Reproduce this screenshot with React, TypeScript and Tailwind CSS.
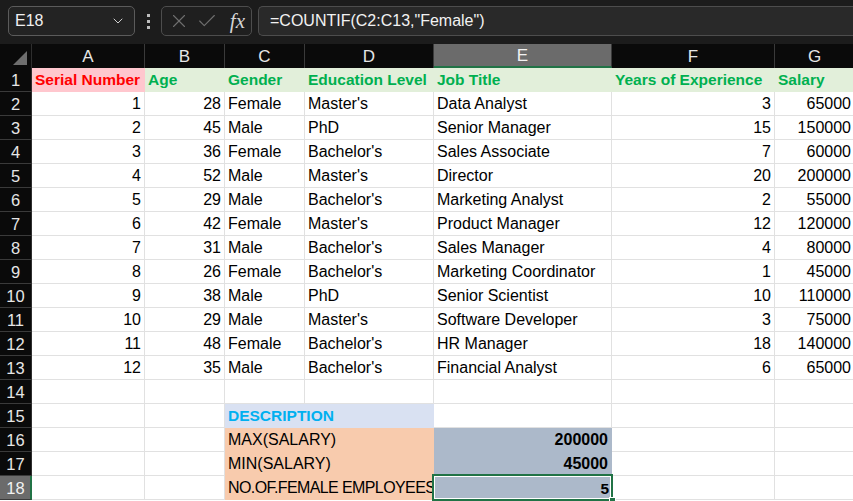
import React from "react";
import { ChevronDown, X, Check } from "lucide-react";

type Cell = string | number;

const rows: Cell[][] = [
  [1, 28, "Female", "Master's", "Data Analyst", 3, 65000],
  [2, 45, "Male", "PhD", "Senior Manager", 15, 150000],
  [3, 36, "Female", "Bachelor's", "Sales Associate", 7, 60000],
  [4, 52, "Male", "Master's", "Director", 20, 200000],
  [5, 29, "Male", "Bachelor's", "Marketing Analyst", 2, 55000],
  [6, 42, "Female", "Master's", "Product Manager", 12, 120000],
  [7, 31, "Male", "Bachelor's", "Sales Manager", 4, 80000],
  [8, 26, "Female", "Bachelor's", "Marketing Coordinator", 1, 45000],
  [9, 38, "Male", "PhD", "Senior Scientist", 10, 110000],
  [10, 29, "Male", "Master's", "Software Developer", 3, 75000],
  [11, 48, "Female", "Bachelor's", "HR Manager", 18, 140000],
  [12, 35, "Male", "Bachelor's", "Financial Analyst", 6, 65000],
];

const headers = ["Serial Number", "Age", "Gender", "Education Level", "Job Title", "Years of Experience", "Salary"];
const cols = ["A", "B", "C", "D", "E", "F", "G"];

const grid = "border-r border-b border-[#e1e1e1]";
const filled = "border-r border-b border-transparent";

function RowHead({ n, sel }: { n: number; sel?: boolean }) {
  return (
    <div
      className={
        sel
          ? "h-[24px] flex items-center justify-center bg-[#6b6b6b] text-[#f2f2f2] border-r-2 border-r-[#217346] border-b border-b-[#3a3a3a] text-[16.5px] pl-[1px] pt-[1px]"
          : "h-[24px] flex items-center justify-center bg-[#0a0a0a] text-[#e6e6e6] border-r border-r-[#2e2e2e] border-b border-b-[#3a3a3a] text-[16.5px] pt-[1px]"
      }
    >
      {n}
    </div>
  );
}

function C({
  children,
  right,
  cls,
}: {
  children?: React.ReactNode;
  right?: boolean;
  cls?: string;
}) {
  return (
    <div
      className={
        "h-[24px] flex items-center whitespace-nowrap overflow-visible px-[3px] pt-[1px] text-[16px] text-black " +
        (right ? "justify-end " : "justify-start ") +
        (cls ?? grid)
      }
    >
      {children}
    </div>
  );
}

export default function App() {
  return (
    <div className="w-[853px] h-[501px] overflow-hidden bg-white font-['Liberation_Sans',Arial,sans-serif]">
      {/* top bar */}
      <div className="h-[44px] bg-[#1c1c1c] flex items-start pt-[6px] pl-[8px] gap-0">
        <div className="w-[127px] h-[30px] rounded-[5px] border border-[#5b5b5b] bg-[#232323] flex items-center justify-between pl-[6px] pr-[8px]">
          <span className="text-[#f0f0f0] text-[16px]">E18</span>
          <ChevronDown size={16} strokeWidth={1.5} color="#cfcfcf" />
        </div>
        <div className="w-[26px] h-[30px] flex flex-col items-center justify-center gap-[3px]">
          <div className="w-[3px] h-[3px] bg-[#bdbdbd]" />
          <div className="w-[3px] h-[3px] bg-[#bdbdbd]" />
          <div className="w-[3px] h-[3px] bg-[#bdbdbd]" />
        </div>
        <div className="w-[91px] h-[30px] rounded-[5px] border border-[#4d4d4d] bg-[#1f1f1f] flex items-center pl-[6px] pr-[4px]">
          <X size={22} strokeWidth={1.2} color="#6f6f6f" />
          <Check size={22} strokeWidth={1.2} color="#6f6f6f" className="ml-[6px]" />
          <span className="ml-auto text-[#d4d4d4] text-[21px] italic font-['Liberation_Serif',serif] leading-none pr-[2px]">
            fx
          </span>
        </div>
        <div className="ml-[6px] flex-1 h-[30px] rounded-l-[5px] border border-r-0 border-[#4d4d4d] bg-[#292929] flex items-center pl-[11px]">
          <span className="text-[#f2f2f2] text-[16px]">=COUNTIF(C2:C13,"Female")</span>
        </div>
      </div>

      {/* sheet */}
      <div className="grid grid-cols-[32px_113px_80px_80px_129px_178px_163px_80px]">
        {/* header row */}
        <div className="h-[24px] bg-[#0a0a0a] border-r border-[#2e2e2e] relative">
          <div className="absolute right-[4px] bottom-[3px] w-0 h-0 border-l-[14px] border-l-transparent border-b-[14px] border-b-[#6e6e6e]" />
        </div>
        {cols.map((c) =>
          c === "E" ? (
            <div
              key={c}
              className="h-[24px] flex items-center justify-center bg-[#6b6b6b] text-[#f2f2f2] text-[17px] border-r border-r-[#3a3a3a] border-b-2 border-b-[#217346] pt-[2px]"
            >
              {c}
            </div>
          ) : (
            <div
              key={c}
              className="h-[24px] flex items-center justify-center bg-[#0a0a0a] text-[#e6e6e6] text-[17px] border-r border-r-[#3a3a3a] pt-[1px]"
            >
              {c}
            </div>
          )
        )}

        {/* row 1 */}
        <RowHead n={1} />
        {headers.map((h, i) => (
          <div
            key={h}
            className={
              "h-[24px] flex items-center whitespace-nowrap px-[3px] pt-[1px] text-[15.5px] font-bold border-r border-b border-transparent " +
              (i === 0 ? "bg-[#ffc7ce] text-[#ff0000]" : "bg-[#e2efda] text-[#00b050]")
            }
          >
            {h}
          </div>
        ))}

        {/* data rows */}
        {rows.map((r, ri) => (
          <React.Fragment key={ri}>
            <RowHead n={ri + 2} />
            {r.map((v, ci) => (
              <C key={ci} right={typeof v === "number"}>
                {v}
              </C>
            ))}
          </React.Fragment>
        ))}

        {/* row 14 */}
        <RowHead n={14} />
        {cols.map((c) => (
          <C key={c} />
        ))}

        {/* row 15 */}
        <RowHead n={15} />
        <C />
        <C />
        <div className="col-span-2 h-[24px] flex items-center px-[3px] pt-[1px] bg-[#d9e1f2] text-[#00b0f0] font-bold text-[15.5px] border-r border-b border-transparent">
          DESCRIPTION
        </div>
        <C />
        <C />
        <C />

        {/* row 16 */}
        <RowHead n={16} />
        <C />
        <C />
        <div className="col-span-2 h-[24px] flex items-center px-[3px] pt-[1px] bg-[#f8cbad] text-black text-[16px] border-r border-b border-transparent">
          MAX(SALARY)
        </div>
        <C right cls={filled + " bg-[#acb9ca] font-bold text-[15.5px]"}>200000</C>
        <C />
        <C />

        {/* row 17 */}
        <RowHead n={17} />
        <C />
        <C />
        <div className="col-span-2 h-[24px] flex items-center px-[3px] pt-[1px] bg-[#f8cbad] text-black text-[16px] border-r border-b border-transparent">
          MIN(SALARY)
        </div>
        <C right cls={filled + " bg-[#acb9ca] font-bold text-[15.5px]"}>45000</C>
        <C />
        <C />

        {/* row 18 */}
        <RowHead n={18} sel />
        <C />
        <C />
        <div className="col-span-2 h-[24px] flex items-center pl-[3px] pt-[1px] bg-[#f8cbad] text-black text-[16px] tracking-[-0.6px] whitespace-nowrap overflow-hidden border-b border-transparent">
          NO.OF.FEMALE EMPLOYEES
        </div>
        <div className="relative h-[24px] flex items-center justify-end px-[3px] pt-[1px] bg-[#acb9ca] font-bold text-[15.5px] text-black">
          5
          <div className="absolute left-[-2px] top-[-2px] right-[-1px] bottom-[-1px] border-2 border-[#217346] shadow-[inset_0_0_0_1px_#ffffff] pointer-events-none" />
          <div className="absolute right-[-4px] bottom-[-4px] w-[7px] h-[7px] bg-[#217346] border border-white" />
        </div>
        <C />
        <C />
      </div>
    </div>
  );
}
